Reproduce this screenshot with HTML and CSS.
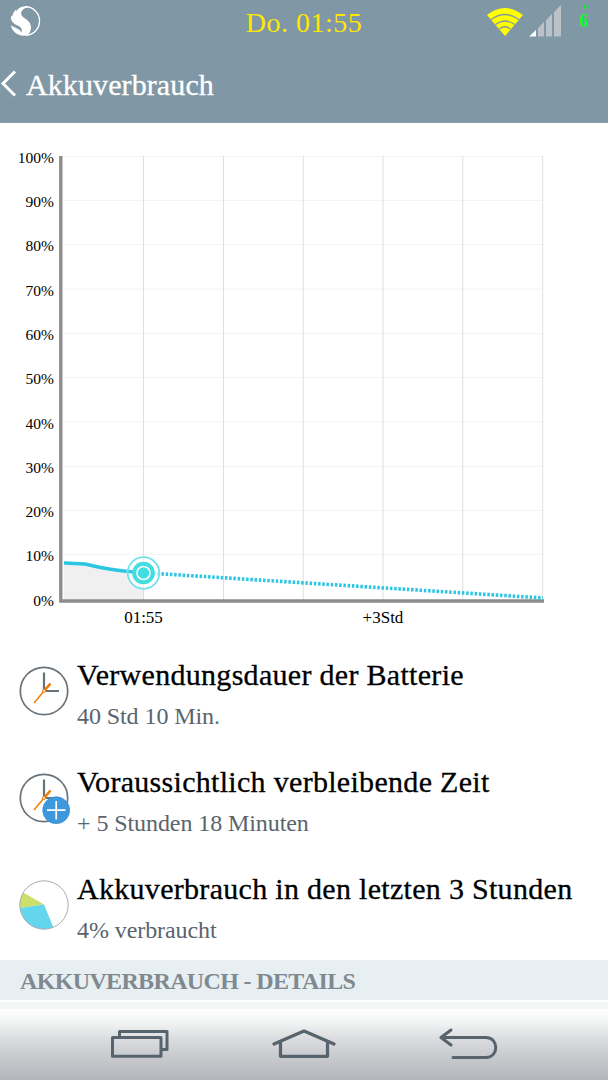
FILE: index.html
```html
<!DOCTYPE html>
<html lang="de">
<head>
<meta charset="utf-8">
<title>Akkuverbrauch</title>
<link rel="stylesheet" href="styles.css">
</head>
<body>
<header class="top">
  <div class="status">
    <svg class="dragon" width="32" height="32" viewBox="0 0 32 32">
      <path d="M16 1.700A14.300 14.300 0 1 1 16.500 30.300" fill="none" stroke="#fff" stroke-width="1.300"/>
      <path d="M19 1.500C14 .8 9.500 2.500 7 6.500L7.300 4.300C4.500 7 3.500 9 3.400 11.500L2.300 10.500C1 15.500 4 18.500 9 20.700C12.500 22.200 13.500 24.500 12.500 27.500C10.500 23.500 6 23 1.900 20.200C3 26.500 8 29.800 13.500 30.700C19 31.500 22 27 22 22.500C22 17.500 18.500 15.300 15 12.800C11.500 10.200 11 6.800 14.500 4.300C16.500 2.700 18 2.400 20.500 2.300Z" fill="#fff"/>
    </svg>
    <span class="clock">Do. 01:55</span>
    <div class="indicators">
      <svg width="38" height="30" viewBox="0 0 38 30">
        <path d="M1 8Q19 -6 37 8L19 29Z" fill="#ff0"/>
        <path d="M5 12.500Q19 2.500 33 12.500M9.500 17.500Q19 10.500 28.500 17.500M13.500 22Q19 17.500 24.500 22" fill="none" stroke="#8097a5" stroke-width="1.300"/>
      </svg>
      <svg width="34" height="34" viewBox="0 0 34 34">
        <path d="M1 32.500L8 26V32.500Z" fill="#fff"/>
        <path d="M10 24L16 18V32.500H10ZM18 16L24 10V32.500H18ZM26 8L33 1V32.500H26Z" fill="#bac2c8"/>
      </svg>
      <svg class="level" width="14" height="28" viewBox="0 0 14 28">
        <ellipse cx="5.600" cy="2.700" rx="1.500" ry="2" fill="#09ef2b"/><circle cx="9.500" cy="3" r=".8" fill="#15d73c"/>
        <text x="0.500" y="23" class="percent">6</text>
      </svg>
    </div>
  </div>
  <div class="titlebar">
    <svg width="17" height="27" viewBox="0 0 17 27"><path d="M15 1.500L3 13.500L15 25.500" fill="none" stroke="#fff" stroke-width="3"/></svg>
    <h1>Akkuverbrauch</h1>
  </div>
</header>
<main>
  <svg class="chart" width="608" height="517" viewBox="0 123 608 517">
    <g stroke="#f3f3f3">
      <path d="M64 156.500H543M64 200.500H543M64 244.500H543M64 289H543M64 333.500H543M64 377.500H543M64 422H543M64 466.500H543M64 510.500H543M64 554.500H543"/>
    </g>
    <path d="M143.500 156V600M223.500 156V600M303.300 156V600M383 156V600M462.800 156V600M542.600 156V600" stroke="#dfdfdf"/>
    <path d="M64 563L85 564L109 569L143.500 573V600H64Z" fill="#f0f0f0"/>
    <path d="M143.500 573V600" stroke="#dadada"/>
    <path d="M60.800 156V601H544" fill="none" stroke="#8d8d8d" stroke-width="3.400"/>
    <path d="M64 563L85 564Q97 567 109 569T143.500 573" fill="none" stroke="#2bc6e2" stroke-width="3.400"/>
    <path d="M153 573.300L543 598" fill="none" stroke="#2bc6e2" stroke-width="3.600" stroke-dasharray="2.500 1.740"/>
    <circle cx="143.500" cy="573" r="17" fill="#fff" fill-opacity=".6"/>
    <path d="M128 571.300L136 572.300" stroke="#2bc6e2" stroke-width="3"/>
    <circle cx="143.500" cy="573" r="15.800" fill="none" stroke="#6fe2ea" stroke-width="1.800"/>
    <circle cx="143.500" cy="573" r="9.300" fill="#fff" stroke="#42dde0" stroke-width="4"/>
    <circle cx="143.500" cy="573" r="5.800" fill="#42dde0"/>
    <g class="ylabels" text-anchor="end">
      <text x="54" y="162.500">100%</text><text x="54" y="207">90%</text><text x="54" y="251.300">80%</text><text x="54" y="295.500">70%</text><text x="54" y="340">60%</text><text x="54" y="384.200">50%</text><text x="54" y="428.500">40%</text><text x="54" y="472.800">30%</text><text x="54" y="517">20%</text><text x="54" y="561">10%</text><text x="54" y="606">0%</text>
    </g>
    <g class="xlabels" text-anchor="middle"><text x="143.500" y="623">01:55</text><text x="383" y="623">+3Std</text></g>
  </svg>
  <section class="rows">
    <div class="row">
      <svg width="52" height="52" viewBox="0 0 52 52">
        <circle cx="26" cy="26" r="23.700" fill="none" stroke="#6a737a" stroke-width="1.700"/>
        <path d="M26 7.500V26H41" fill="none" stroke="#68727b" stroke-width="2.200"/>
        <path d="M16 38L26 26" stroke="#f07c00" stroke-width="1.400"/><path d="M26 26L32.500 18.500" stroke="#f07c00" stroke-width="2.600"/>
        <circle cx="26" cy="26" r="1.500" fill="#fff" stroke="#f07c00"/>
      </svg>
      <div><h2>Verwendungsdauer der Batterie</h2><p>40 Std 10 Min.</p></div>
    </div>
    <div class="row">
      <svg width="52" height="52" viewBox="0 0 52 52">
        <circle cx="26" cy="26" r="23.700" fill="none" stroke="#6a737a" stroke-width="1.700"/>
        <path d="M26 7.500V26H41" fill="none" stroke="#68727b" stroke-width="2.200"/>
        <path d="M16 38L26 26" stroke="#f07c00" stroke-width="1.400"/><path d="M26 26L32.500 18.500" stroke="#f07c00" stroke-width="2.600"/>
        <circle cx="26" cy="26" r="1.500" fill="#fff" stroke="#f07c00"/>
        <circle cx="38.200" cy="38.200" r="13.500" fill="#3d98dc" stroke="#3488c8" stroke-width=".6"/>
        <path d="M29 38.200H47.500M38.200 29V47.500" stroke="#fff" stroke-width="1.700"/>
      </svg>
      <div><h2>Voraussichtlich verbleibende Zeit</h2><p>+ 5 Stunden 18 Minuten</p></div>
    </div>
    <div class="row">
      <svg width="52" height="52" viewBox="0 0 52 52">
        <path d="M26 25.500L5.300 13.500A24.200 24.200 0 0 0 2 29Z" fill="#cbdf6a"/>
        <path d="M26 25.500L2 29A24.200 24.200 0 0 0 35.300 48.300Z" fill="#63d5ec"/>
        <circle cx="26" cy="26" r="24.200" fill="none" stroke="#a8acaf"/>
      </svg>
      <div><h2>Akkuverbrauch in den letzten 3 Stunden</h2><p>4% verbraucht</p></div>
    </div>
  </section>
  <div class="details">AKKUVERBRAUCH - DETAILS</div>
  <div class="next"></div>
</main>
<nav class="nav">
  <svg width="60" height="30" viewBox="0 0 60 30" fill="none" stroke="#57646e" stroke-width="3" stroke-linejoin="round"><path d="M2.500 9.500H51V28.300H2.500ZM9.500 9.500V3.500H57V21.500H51"/></svg>
  <svg class="home" width="66" height="32" viewBox="0 0 66 32" fill="none" stroke="#57646e" stroke-width="3.200" stroke-linecap="round" stroke-linejoin="round"><path d="M3 16L33 3L63 16M9.500 14V28.300H56.500V14"/></svg>
  <svg width="60" height="34" viewBox="0 0 60 34" fill="none" stroke="#57646e" stroke-width="3" stroke-linecap="round" stroke-linejoin="round"><path d="M13 2L3 9.500L13 17M3 9.500H48C61 9.500 61 29.500 48 29.500H15"/></svg>
</nav>
</body>
</html>
```
FILE: styles.css
```css
* { box-sizing: border-box; }
body {
  margin: 0;
  width: 608px;
  height: 1080px;
  overflow: hidden;
  display: flex;
  flex-direction: column;
  background: #fff;
  color: #000;
  font-family: "Liberation Serif", serif;
}
svg { display: block; flex: none; }
.top { height: 123px; flex: none; background: #8097a5; border-bottom: 1px solid #8ba1ae; }
.status {
  display: grid;
  grid-template-columns: 1fr auto 1fr;
  height: 46px;
}
.dragon { margin: 5px 0 0 9px; }
.clock { font-size: 28px; line-height: 32px; letter-spacing: .5px; color: #ffe800; margin-top: 7px; }
.indicators { display: flex; justify-content: flex-end; padding-right: 15px; }
.indicators svg:first-child { margin: 7px 4px 0 0; }
.indicators svg:nth-child(2) { margin: 4px 17px 0 0; }
.level { margin-top: 4px; }
.percent { font-size: 18px; font-weight: bold; fill: #09ff28; }
.titlebar { display: flex; align-items: center; height: 76px; }
.titlebar svg { margin-top: -1px; }
h1 { margin: 1px 0 0 9px; font-size: 30px; line-height: 34px; font-weight: 400; letter-spacing: .1px; color: #fff; -webkit-text-stroke: .3px #fff; }
main { flex: 1; }
.ylabels { font-size: 15.500px; }
.xlabels { font-size: 17px; }
.rows { height: 320px; }
.row { display: flex; height: 107px; padding: 25px 0 0 18px; }
.row > div { margin: -7px 0 0 7px; }
h2 { margin: 0; font-size: 30px; line-height: 34px; font-weight: 400; letter-spacing: .3px; white-space: nowrap; -webkit-text-stroke: .3px #000; }
p { margin: 10px 0 0; font-size: 24px; line-height: 28px; letter-spacing: -.08px; color: #59646d; white-space: nowrap; }
.details { height: 40px; padding-left: 20px; background: #e7eff3; color: #7f898f; font-size: 24px; font-weight: bold; line-height: 42px; letter-spacing: -.65px; }
.next { height: 9px; border-top: 2px solid #fff; background: #f3f6f6; }
.nav {
  height: 71px;
  flex: none;
  display: flex;
  padding: 19px 0 0 110px;
  background: linear-gradient(#fff 0, #f1f2f2 20%, #dadbde 43%, #c6c8cc 70%, #b3b6bb 100%);
}
.home { margin: 0 101px 0 101px; }
```
